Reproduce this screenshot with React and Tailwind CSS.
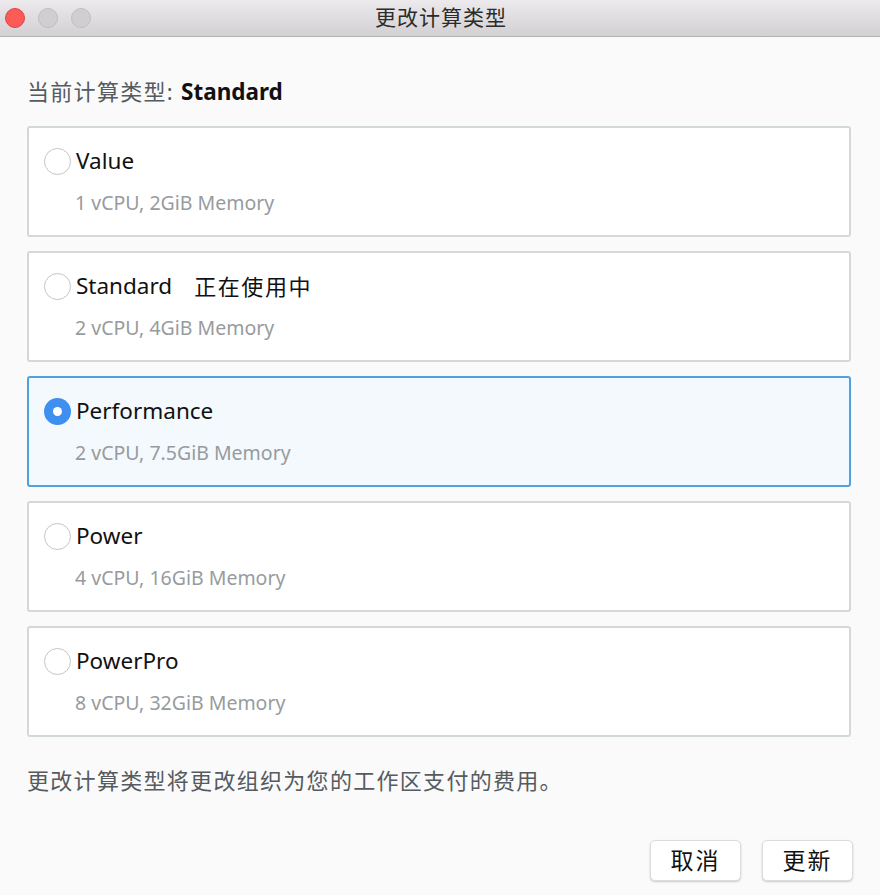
import React from "react";

const F = { fontFamily: '"Noto Sans", "Noto Sans CJK SC", sans-serif' };

const options = [
  { name: "Value", spec: "1 vCPU, 2GiB Memory" },
  { name: "Standard", spec: "2 vCPU, 4GiB Memory", current: true },
  { name: "Performance", spec: "2 vCPU, 7.5GiB Memory", selected: true },
  { name: "Power", spec: "4 vCPU, 16GiB Memory" },
  { name: "PowerPro", spec: "8 vCPU, 32GiB Memory" },
];

function Radio({ on }) {
  return on ? (
    <div className="w-[27px] h-[27px] rounded-full bg-[#3e8ff0] flex items-center justify-center shrink-0">
      <div className="w-[9px] h-[9px] rounded-full bg-white" />
    </div>
  ) : (
    <div className="w-[27px] h-[27px] rounded-full border border-[#c4c4c4] bg-white shrink-0" />
  );
}

export default function App() {
  return (
    <div className="w-[880px] h-[895px] bg-[#fafafa] flex flex-col overflow-hidden" style={F}>
      <div className="h-[37px] shrink-0 bg-gradient-to-b from-[#eceaec] to-[#d2d0d2] border-b border-[#b3b1b3] relative flex items-center justify-center">
        <div className="absolute left-[5px] top-[8px] flex gap-[13px]">
          <div className="w-[20px] h-[20px] rounded-full bg-[#fc5b57] border border-[#e0443e]" />
          <div className="w-[20px] h-[20px] rounded-full bg-[#d0cfd0] border border-[#c0bfc0]" />
          <div className="w-[20px] h-[20px] rounded-full bg-[#d0cfd0] border border-[#c0bfc0]" />
        </div>
        <div className="text-[21px] tracking-[1px] text-[#2b2b2b] pl-[2px]">更改计算类型</div>
      </div>

      <div className="px-[27px] pt-[39px] flex flex-col">
        <div className="text-[22px] leading-[30px] text-[#555b60] tracking-[1.3px]">
          当前计算类型: <span className="font-bold text-[#111] tracking-normal text-[22.5px]">Standard</span>
        </div>

        <div className="mt-[19px] w-[824px] flex flex-col gap-[14px]">
          {options.map((o) => (
            <div
              key={o.name}
              className={
                "h-[111px] rounded-[3px] border-2 pl-[15px] pt-[18px] " +
                (o.selected ? "border-[#4da3e0] bg-[#f3f9fd]" : "border-[#d3d9db] bg-white")
              }
            >
              <div className="flex items-center h-[30px]">
                <Radio on={o.selected} />
                <span className="ml-[5px] text-[22.5px] text-[#111]">{o.name}</span>
                {o.current && (
                  <span className="ml-[22px] text-[22px] tracking-[1.6px] text-[#111]">正在使用中</span>
                )}
              </div>
              <div className="mt-[12px] pl-[31px] text-[19.5px] text-[#979b9e]">{o.spec}</div>
            </div>
          ))}
        </div>

        <div className="mt-[28px] text-[22px] leading-[30px] tracking-[1.3px] text-[#555b60]">
          更改计算类型将更改组织为您的工作区支付的费用。
        </div>

        <div className="mt-[45px] flex justify-end gap-[21px] pr-0 w-[826px]">
          <button className="w-[91px] h-[41px] rounded-[5px] bg-white border border-[#dcdcdc] shadow-[0_1px_2px_rgba(0,0,0,0.2)] text-[23px] text-[#111] tracking-[2px]">
            取消
          </button>
          <button className="w-[91px] h-[41px] rounded-[5px] bg-white border border-[#dcdcdc] shadow-[0_1px_2px_rgba(0,0,0,0.2)] text-[23px] text-[#111] tracking-[2px]">
            更新
          </button>
        </div>
      </div>
    </div>
  );
}
